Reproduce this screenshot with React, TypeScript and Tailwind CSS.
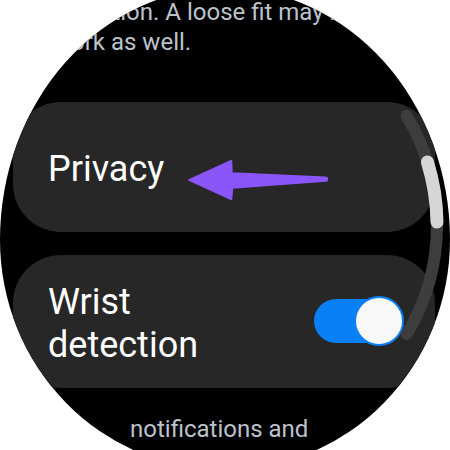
export default function App() {
  return (
    <div className="relative w-[450px] h-[450px] overflow-hidden bg-white font-['Roboto',sans-serif]">
      <div className="w-[450px] h-[482px] mt-[-12px] rounded-tl-[225px_252px] rounded-tr-[225px_252px] rounded-bl-[225px_230px] rounded-br-[225px_230px] bg-black overflow-hidden pt-[9px]">
        <p className="pl-[53px] text-[24px] leading-[30px] text-[#bcc3cc] whitespace-nowrap">
          detection. A loose fit may not
          <br />
          work as well.
        </p>

        <div className="mt-[45px] ml-[13px] mr-[15px] h-[130px] rounded-[48px] bg-[#272727] flex items-center pl-[35px] pt-[5px]">
          <span className="text-[36px] leading-[43px] text-white">Privacy</span>
        </div>

        <div className="mt-[23px] ml-[13px] mr-[15px] rounded-[48px] bg-[#272727] flex items-center justify-between pl-[35px] pr-[31px] pt-[26px] pb-[21px]">
          <span className="text-[36px] leading-[43px] text-white">
            Wrist
            <br />
            detection
          </span>
          <div className="relative w-[90px] h-[50px] mb-[6px]">
            <div className="absolute left-0 right-[2px] top-[3px] bottom-[3px] rounded-full bg-[#0a80f7]" />
            <div className="absolute right-0 top-0 w-[50px] h-[50px] rounded-full bg-[#f8f8f8] border-2 border-[#0a80f7]" />
          </div>
        </div>

        <p className="mt-[26px] pl-[130px] text-[24px] leading-[30px] text-[#bcc3cc] whitespace-nowrap">
          notifications and
        </p>
      </div>

      <svg className="absolute inset-0 pointer-events-none" width="450" height="450" viewBox="0 0 450 450">
        <path d="M406.7 115.8 A212 212 0 0 1 406.7 334.2" fill="none" stroke="#3d3d3d" strokeWidth="12" strokeLinecap="round" />
        <path d="M427.4 162 A212 212 0 0 1 437 222" fill="none" stroke="#d6d6d6" strokeWidth="13" strokeLinecap="round" />
        <path
          d="M189 180 L231.5 160.5 L232 173 L325.5 177.3 A1.9 1.9 0 0 1 325.5 181.1 L232.5 188 L231.5 199.5 Z"
          fill="#8b55fc"
          stroke="#8b55fc"
          strokeWidth="1.5"
          strokeLinejoin="round"
        />
      </svg>
    </div>
  );
}
